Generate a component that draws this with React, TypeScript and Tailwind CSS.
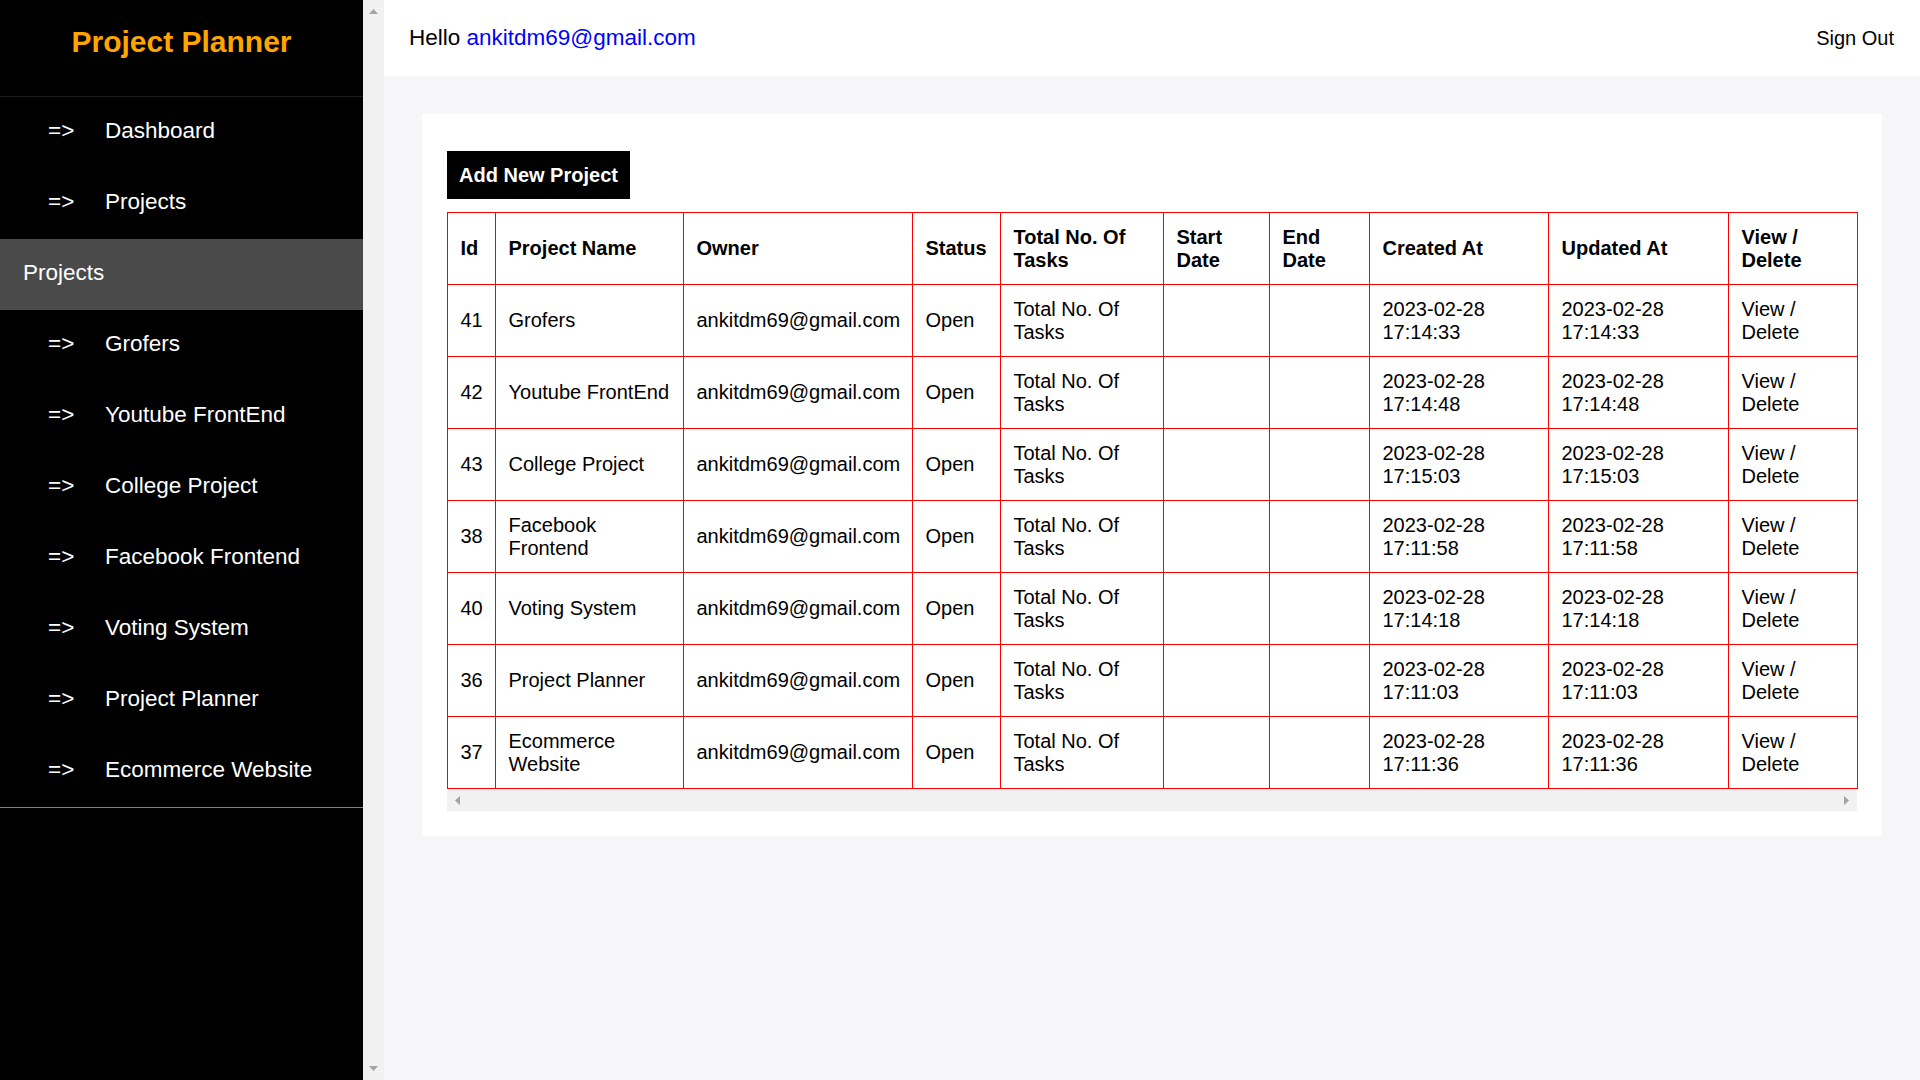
import React from "react";

const navTop = ["Dashboard", "Projects"];
const navProjects = [
  "Grofers",
  "Youtube FrontEnd",
  "College Project",
  "Facebook Frontend",
  "Voting System",
  "Project Planner",
  "Ecommerce Website",
];

const rows = [
  { id: 41, name: "Grofers", t: "17:14:33" },
  { id: 42, name: "Youtube FrontEnd", t: "17:14:48" },
  { id: 43, name: "College Project", t: "17:15:03" },
  { id: 38, name: "Facebook Frontend", t: "17:11:58" },
  { id: 40, name: "Voting System", t: "17:14:18" },
  { id: 36, name: "Project Planner", t: "17:11:03" },
  { id: 37, name: "Ecommerce Website", t: "17:11:36" },
];

const headers = [
  "Id",
  "Project Name",
  "Owner",
  "Status",
  "Total No. Of Tasks",
  "Start Date",
  "End Date",
  "Created At",
  "Updated At",
  "View / Delete",
];

const colWidths = [48, 188, 229, 88, 163, 106, 100, 179, 180, 129];

function NavRow({ label }: { label: string }) {
  return (
    <div className="flex h-[71px] items-center pb-[3px] text-[22.5px] leading-[26px] text-white">
      <span className="ml-[48px] w-[57px]">=&gt;</span>
      <span>{label}</span>
    </div>
  );
}

function Tri({ dir }: { dir: "up" | "down" | "left" | "right" }) {
  if (dir === "up")
    return (
      <svg width="9" height="5" viewBox="0 0 9 5" className="block">
        <polygon points="4.5,0 9,5 0,5" fill="#a3a3a3" />
      </svg>
    );
  if (dir === "down")
    return (
      <svg width="9" height="5" viewBox="0 0 9 5" className="block">
        <polygon points="0,0 9,0 4.5,5" fill="#a3a3a3" />
      </svg>
    );
  if (dir === "left")
    return (
      <svg width="5" height="9" viewBox="0 0 5 9" className="block">
        <polygon points="5,0 5,9 0,4.5" fill="#a3a3a3" />
      </svg>
    );
  return (
    <svg width="5" height="9" viewBox="0 0 5 9" className="block">
      <polygon points="0,0 5,4.5 0,9" fill="#a3a3a3" />
    </svg>
  );
}

export default function App() {
  return (
    <div className="flex h-[1080px] w-[1920px] overflow-hidden bg-[#f6f6f8] font-['Liberation_Sans',Arial,sans-serif] text-black">
      {/* Sidebar */}
      <aside className="flex h-full w-[363px] shrink-0 flex-col bg-black">
        <div className="h-[97px] border-b border-[#1e1e1e] pt-[25px] text-center text-[30px] font-bold leading-[34px] text-[#ffa500]">
          Project Planner
        </div>
        {navTop.map((n) => (
          <NavRow key={n} label={n} />
        ))}
        <div className="flex h-[71px] items-center bg-[#4a4a4a] pb-[3px] pl-[23px] text-[22.5px] leading-[26px] text-white">
          Projects
        </div>
        {navProjects.map((n) => (
          <NavRow key={n} label={n} />
        ))}
        <div className="h-px bg-[#808080]" />
      </aside>

      {/* Sidebar scrollbar */}
      <div className="flex h-full w-[21px] shrink-0 flex-col items-center justify-between bg-[#f1f1f1] pt-[9px] pb-[9px]">
        <Tri dir="up" />
        <Tri dir="down" />
      </div>

      {/* Main */}
      <main className="flex min-w-0 flex-1 flex-col">
        <header className="flex h-[76px] items-center justify-between bg-white pl-[25px] pr-[26px]">
          <div className="text-[22.5px] leading-[26px]">
            Hello <span className="text-[#0000ff]">ankitdm69@gmail.com</span>
          </div>
          <div className="text-[20px] leading-[23px]">Sign Out</div>
        </header>

        <div className="px-[38px] pt-[38px]">
          <div className="bg-white px-[25px] pb-[25px] pt-[37px]">
            <button className="bg-black px-[12px] py-[12.5px] text-[20px] font-bold leading-[23px] text-white">
              Add New Project
            </button>
            <div className="mt-[13px]">
              <table className="w-[1410px] table-fixed border-collapse text-[20px] leading-[23px]">
                <colgroup>
                  {colWidths.map((w, i) => (
                    <col key={i} style={{ width: w }} />
                  ))}
                </colgroup>
                <thead>
                  <tr>
                    {headers.map((h) => (
                      <th
                        key={h}
                        className="border border-[#ff0000] px-[12.5px] py-[12.5px] text-left align-middle font-bold"
                      >
                        {h}
                      </th>
                    ))}
                  </tr>
                </thead>
                <tbody>
                  {rows.map((r) => (
                    <tr key={r.id}>
                      <td className="border border-[#ff0000] px-[12.5px] py-[12.5px] align-middle">{r.id}</td>
                      <td className="border border-[#ff0000] px-[12.5px] py-[12.5px] align-middle">{r.name}</td>
                      <td className="border border-[#ff0000] px-[12.5px] py-[12.5px] align-middle">ankitdm69@gmail.com</td>
                      <td className="border border-[#ff0000] px-[12.5px] py-[12.5px] align-middle">Open</td>
                      <td className="border border-[#ff0000] px-[12.5px] py-[12.5px] align-middle">Total No. Of Tasks</td>
                      <td className="border border-[#ff0000] px-[12.5px] py-[12.5px] align-middle"></td>
                      <td className="border border-[#ff0000] px-[12.5px] py-[12.5px] align-middle"></td>
                      <td className="border border-[#ff0000] px-[12.5px] py-[12.5px] align-middle">2023-02-28 {r.t}</td>
                      <td className="border border-[#ff0000] px-[12.5px] py-[12.5px] align-middle">2023-02-28 {r.t}</td>
                      <td className="border border-[#ff0000] px-[12.5px] py-[12.5px] align-middle">View / Delete</td>
                    </tr>
                  ))}
                </tbody>
              </table>
              <div className="flex h-[22px] w-[1410px] items-center justify-between bg-[#f1f1f1] px-[8px]">
                <Tri dir="left" />
                <Tri dir="right" />
              </div>
            </div>
          </div>
        </div>
      </main>
    </div>
  );
}
